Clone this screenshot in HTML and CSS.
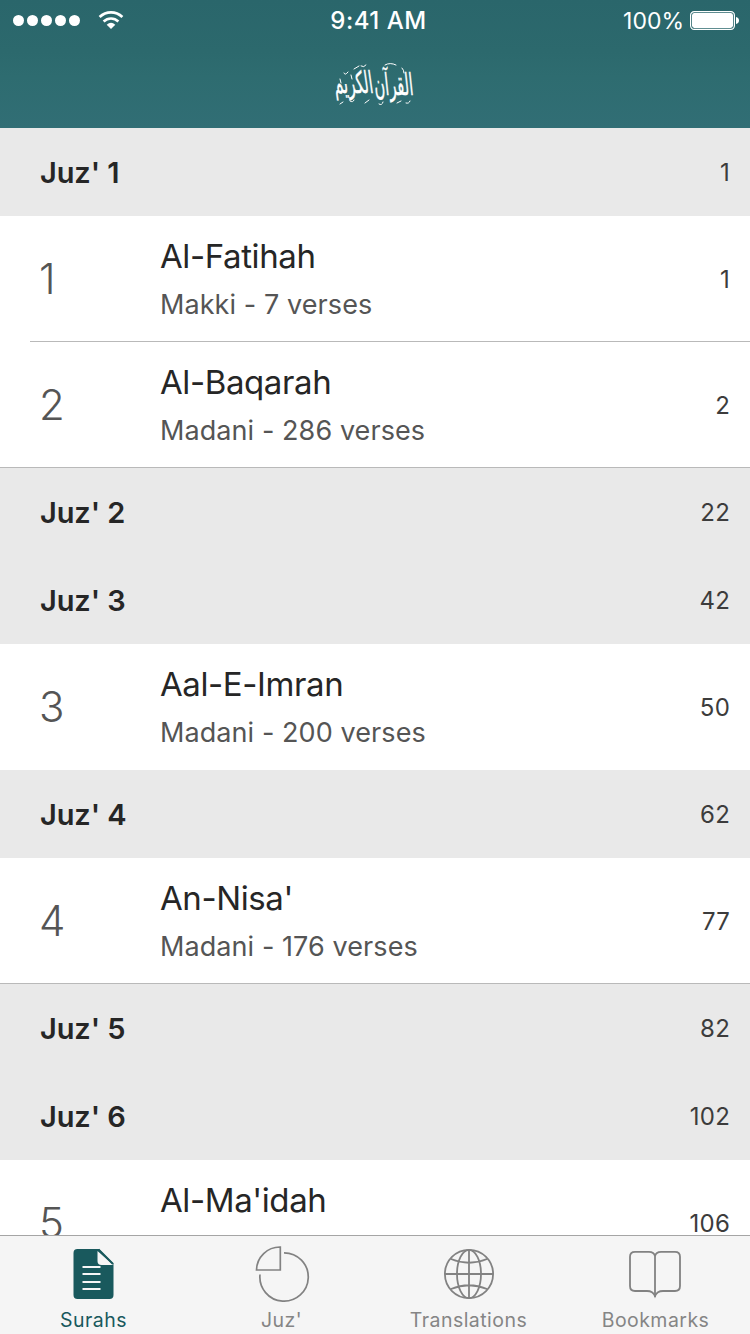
FILE: index.html
```html
<!DOCTYPE html>
<html lang="en">
<head>
<meta charset="utf-8">
<title>Quran</title>
<link rel="stylesheet" href="styles.css">
</head>
<body>
<div class="app">
  <header class="topbar">
    <div class="status">
      <div class="status-left">
        <span class="signal"><i></i><i></i><i></i><i></i><i></i></span>
        <svg class="wifi" width="26" height="20" viewBox="0 0 26 20" fill="none" stroke="#fff">
          <path d="M1.6 7.1C8.2.9 17.8.9 24.4 7.1" stroke-width="2.7"/>
          <path d="M5.6 11.5C9.9 7.5 16.1 7.5 20.4 11.5" stroke-width="2.6"/>
          <path d="M8.7 14.7Q13 11 17.3 14.7L13 19Z" fill="#fff" stroke="none"/>
        </svg>
      </div>
      <div class="clock">9:41 AM</div>
      <div class="status-right">
        <span class="percent">100%</span>
        <svg width="50" height="20" viewBox="0 0 50 20">
          <rect x=".6" y=".6" width="43.8" height="17.8" rx="3.6" fill="none" stroke="#fff" stroke-width="1.2"/>
          <rect x="2" y="2" width="41" height="15" rx="2.4" fill="#fff"/>
          <path d="M46 6q3 .8 3 3.5t-3 3.500z" fill="#fff"/>
        </svg>
      </div>
    </div>
    <div class="brand">
      <svg width="80" height="48" viewBox="0 0 80 48" fill="#fff">
        <g class="script">
          <text transform="translate(40 35) skewX(6) scale(1 1.6)" textLength="39" lengthAdjust="spacingAndGlyphs">القرآن</text>
          <text transform="translate(0 33) skewX(8) scale(1 1.6)" textLength="39" lengthAdjust="spacingAndGlyphs">الكريم</text>
        </g>
        <g fill="none" stroke="#fff" stroke-width="1" stroke-linecap="round">
          <path d="M5 19l1 4M9 13q1 3 4-1M19 9l5-3M16 15l1 4M26 6q3 2 5-1M50 5q5-3 11 0M67 8q2 2 2 5M8 42l-3 2M15 41q3 2 4-1M30 43l4-3M44 44q3 2 4-2M62 43l4-2M71 43q3 1 4-2"/>
        </g>
      </svg>
    </div>
  </header>

  <main class="list">
    <h2 class="juz"><span>Juz' 1</span><span class="page">1</span></h2>
    <div class="surah inset"><span class="num">1</span><div class="info"><b>Al-Fatihah</b><small>Makki - 7 verses</small></div><span class="page">1</span></div>
    <div class="surah full"><span class="num">2</span><div class="info"><b>Al-Baqarah</b><small>Madani - 286 verses</small></div><span class="page">2</span></div>
    <h2 class="juz"><span>Juz' 2</span><span class="page">22</span></h2>
    <h2 class="juz"><span>Juz' 3</span><span class="page">42</span></h2>
    <div class="surah"><span class="num">3</span><div class="info"><b>Aal-E-Imran</b><small>Madani - 200 verses</small></div><span class="page">50</span></div>
    <h2 class="juz"><span>Juz' 4</span><span class="page">62</span></h2>
    <div class="surah full"><span class="num">4</span><div class="info"><b>An-Nisa'</b><small>Madani - 176 verses</small></div><span class="page">77</span></div>
    <h2 class="juz"><span>Juz' 5</span><span class="page">82</span></h2>
    <h2 class="juz"><span>Juz' 6</span><span class="page">102</span></h2>
    <div class="surah"><span class="num">5</span><div class="info"><b>Al-Ma'idah</b></div><span class="page">106</span></div>
  </main>

  <nav class="tabs">
    <a class="tab active">
      <svg width="60" height="60" viewBox="0.5 0 60 60">
        <path d="M13 9h22.500L50 23.500V55a4 4 0 0 1-4 4H14a4 4 0 0 1-4-4V13a4 4 0 0 1 4-4z" fill="#19595d"/>
        <path d="M34 11v10q0 4 4 4h12z" fill="#f6f6f6"/>
        <path d="M35 9.500L49.500 24" stroke="#19595d" stroke-width="2"/>
        <path d="M19 27h18M19 34h18M19 42h18M19 49h18" stroke="#f6f6f6" stroke-width="2"/>
      </svg>
      <span>Surahs</span>
    </a>
    <a class="tab">
      <svg width="60" height="60" viewBox="1 0 60 60" fill="none" stroke="#828282" stroke-width="1.7">
        <path d="M30.300 7V30H6.500A23.500 23.500 0 0 1 30.300 7z"/>
        <path d="M34 12.800A24.200 24.200 0 1 1 10 34.500"/>
      </svg>
      <span>Juz'</span>
    </a>
    <a class="tab">
      <svg width="60" height="60" viewBox="0 0 60 60" fill="none" stroke="#828282" stroke-width="1.8">
        <circle cx="31" cy="34" r="24.100"/>
        <ellipse cx="31" cy="34" rx="12" ry="24.100"/>
        <path d="M31 10v48M7 34h48M13 19q18 7.500 36 0M13 49q18-7.500 36 0"/>
      </svg>
      <span>Translations</span>
    </a>
    <a class="tab">
      <svg width="60" height="60" viewBox="0 0 60 60" fill="none" stroke="#828282" stroke-width="1.8">
        <path d="M30 16q-1-4.200-6-4.200H10q-5 0-5 5V46q0 5 5 5h12q6 0 8 5 2-5 8-5h12q5 0 5-5V16.800q0-5-5-5H36q-5 0-6 4.200z"/>
        <path d="M30 15v42"/>
      </svg>
      <span>Bookmarks</span>
    </a>
  </nav>
</div>
</body>
</html>
```
FILE: styles.css
```css
* { box-sizing: border-box; }
body { margin: 0; font-family: Inter, Roboto, sans-serif; color: #262626; background: #fff; }
.app { width: 750px; height: 1334px; overflow: hidden; display: flex; flex-direction: column; }

.topbar { flex: none; height: 128px; color: #fff; background: linear-gradient(#2a666b, #2c696d 40%, #2e6c70 60%, #316e75); }
.status { height: 40px; display: grid; grid-template-columns: 1fr auto 1fr; align-items: center; padding: 1px 10px 0 13px; }
.status-left { display: flex; align-items: center; gap: 18px; }
.signal { display: flex; gap: 3px; }
.signal i { width: 11px; height: 11px; border-radius: 50%; background: #fff; }
.wifi { margin-top: -1px; }
.clock { padding-left: 4px; font-size: 24px; font-weight: 500; letter-spacing: .5px; }
.status-right { display: flex; justify-content: flex-end; align-items: center; gap: 6px; }
.percent { padding-top: 1px; font-size: 23px; font-weight: 400; }
.brand { display: flex; justify-content: center; padding-top: 20px; }
.brand svg { overflow: visible; }
.script { font-family: "DejaVu Sans", sans-serif; font-size: 19px; stroke: #fff; stroke-width: .25; }

.list { flex: 1; min-height: 0; overflow: hidden; }
.juz { height: 88px; margin: 0; padding: 1px 20px 0 40px; display: flex; align-items: center; justify-content: space-between; background: #e9e9e9; font-size: 29px; font-weight: 600; letter-spacing: -.1px; }
.page { font-size: 24px; font-weight: 400; letter-spacing: .2px; color: #3c3c3c; }
.surah { height: 126px; padding: 0 20px 0 39px; display: flex; align-items: center; }
.num { width: 122px; padding-bottom: 2px; font-size: 42px; font-weight: 300; color: #555; }
.info { flex: 1; height: 126px; margin-left: -1px; padding-top: 19px; display: flex; flex-direction: column; }
.info b { font-size: 33px; line-height: 42px; font-weight: 400; letter-spacing: -.4px; }
.info small { margin-top: 10px; font-size: 27px; line-height: 36px; color: #555; letter-spacing: .08px; }
.inset { background: linear-gradient(#b9b9b9, #b9b9b9) 30px 125px / 720px 1px no-repeat; }
.full { background: linear-gradient(#b9b9b9, #b9b9b9) 0 125px / 750px 1px no-repeat; }

.tabs { flex: none; height: 99px; display: grid; grid-template-columns: repeat(4, 1fr); border-top: 1px solid #a5a5a5; background: #f5f5f5; padding-right: 2px; }
.tab { display: flex; flex-direction: column; align-items: center; padding-top: 4px; font-size: 19.5px; color: #858585; letter-spacing: .45px; }
.tab svg { flex: none; overflow: visible; }
.tab span { line-height: 24px; margin-top: 8px; }
.tab:not(.active) span { padding-left: 2px; }
.active { color: #19595d; }
```
